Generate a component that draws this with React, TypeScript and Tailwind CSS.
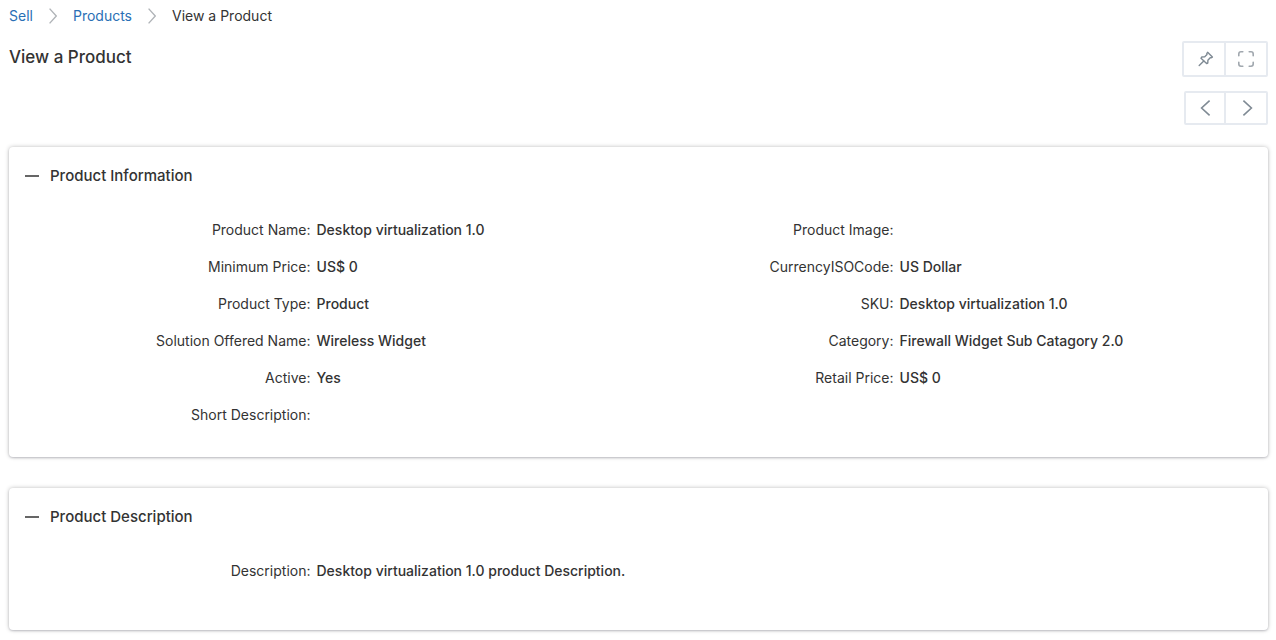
import React, { useState } from 'react'

type Field = { label: string; value: string }

const leftFields: Field[] = [
  { label: 'Product Name', value: 'Desktop virtualization 1.0' },
  { label: 'Minimum Price', value: 'US$ 0' },
  { label: 'Product Type', value: 'Product' },
  { label: 'Solution Offered Name', value: 'Wireless Widget' },
  { label: 'Active', value: 'Yes' },
  { label: 'Short Description', value: '' },
]

const rightFields: Field[] = [
  { label: 'Product Image', value: '' },
  { label: 'CurrencyISOCode', value: 'US Dollar' },
  { label: 'SKU', value: 'Desktop virtualization 1.0' },
  { label: 'Category', value: 'Firewall Widget Sub Catagory 2.0' },
  { label: 'Retail Price', value: 'US$ 0' },
]

const CrumbArrow = () => (
  <svg className="w-2 h-4 shrink-0" viewBox="0 0 8 16" fill="none" stroke="#b0b4b8" strokeWidth="1.4" aria-hidden="true">
    <path d="M0.6 0.6 7.3 8 0.6 15.4" />
  </svg>
)

const PinIcon = () => (
  <svg className="w-4 h-4" viewBox="0 0 16 16" fill="none" stroke="#7f8a94" strokeWidth="1.4" strokeLinejoin="round" strokeLinecap="round" aria-hidden="true">
    <path d="M9.6 1.3 14.4 6.1 13 6.9 12.2 6.7 9.9 9.2 9.8 12 8.6 12.6 3 7.3 3.7 6 6.5 5.9 9 3.6 8.8 2.6Z" />
    <path d="M5.8 10 1.2 14.6" />
  </svg>
)

const ExpandIcon = () => (
  <svg className="w-4 h-4" viewBox="0 0 16 16" fill="none" stroke="#a0a7ae" strokeWidth="1.6" strokeLinecap="round" aria-hidden="true">
    <path d="M0.8 4.8V3Q0.8 0.8 3 0.8H4.8M11.2 0.8H13Q15.2 0.8 15.2 3V4.8M15.2 11.2V13Q15.2 15.2 13 15.2H11.2M4.8 15.2H3Q0.8 15.2 0.8 13V11.2" />
  </svg>
)

const ArrowIcon = ({ path }: { path: string }) => (
  <svg className="w-4 h-4" viewBox="0 0 16 16" fill="none" stroke="#7f8a94" strokeWidth="1.6" aria-hidden="true">
    <path d={path} />
  </svg>
)

const FieldList = ({ fields }: { fields: Field[] }) => {
  return (
    <dl className="text-sm">
      {fields.map((field) => (
        <div key={field.label} className="flex gap-1.5 h-[37px] items-center">
          <dt className="w-[44%] shrink-0 text-right">{field.label}:</dt>
          <dd className="font-medium">{field.value}</dd>
        </div>
      ))}
    </dl>
  )
}

const Section = ({ title, children }: { title: string; children: React.ReactNode }) => {
  const [open, setOpen] = useState(true)

  return (
    <section className="rounded-sm bg-white shadow-[0_0_4px_rgba(0,0,0,0.25),0_1px_2px_rgba(0,0,40,0.15)] pt-[17px] pb-6 min-h-[142px]">
      <h2>
        <button
          type="button"
          aria-expanded={open}
          onClick={() => setOpen(!open)}
          className="flex items-center gap-[11px] px-4 h-6 text-[15px] font-medium cursor-pointer"
        >
          <span className="flex items-center justify-center w-3.5 h-3.5">
            <span className="w-3.5 h-0.5 bg-[#666]"></span>
          </span>
          {title}
        </button>
      </h2>
      {open && <div className="grid grid-cols-2 pl-[45px] pr-12 pt-[23px]">{children}</div>}
    </section>
  )
}

export default function App() {
  return (
    <main className="pl-[9px] pr-2 pb-2 bg-white text-[#333] font-['Inter',sans-serif]">
      <nav aria-label="Breadcrumb" className="flex items-center gap-4 h-8 text-sm">
        <a href="#sell" className="text-[#2a6fb5]">Sell</a>
        <CrumbArrow />
        <a href="#products" className="text-[#2a6fb5]">Products</a>
        <CrumbArrow />
        <span>View a Product</span>
      </nav>

      <header className="flex justify-between pt-[9px]">
        <h1 className="text-[17px] font-medium leading-8">View a Product</h1>
        <div className="flex flex-col items-end gap-3.5">
          <div className="flex h-9 border-2 border-[#e6eaf0] rounded-xs divide-x-2 divide-[#e6eaf0]">
            <button type="button" aria-label="Pin" className="w-[42px] flex items-center justify-center pl-1">
              <PinIcon />
            </button>
            <button type="button" aria-label="Full screen" className="w-10 flex items-center justify-center">
              <ExpandIcon />
            </button>
          </div>
          <div className="flex h-[34px] border-2 border-[#e6eaf0] rounded-xs divide-x-2 divide-[#e6eaf0]">
            <button type="button" aria-label="Previous" className="w-10 flex items-center justify-center">
              <ArrowIcon path="M12.6 0.6 4.6 8 12.6 15.4" />
            </button>
            <button type="button" aria-label="Next" className="w-10 flex items-center justify-center">
              <ArrowIcon path="M5.4 0.6 13.4 8 5.4 15.4" />
            </button>
          </div>
        </div>
      </header>

      <div className="flex flex-col gap-[31px] mt-[22px]">
        <Section title="Product Information">
          <FieldList fields={leftFields} />
          <FieldList fields={rightFields} />
        </Section>
        <Section title="Product Description">
          <FieldList fields={[{ label: 'Description', value: 'Desktop virtualization 1.0 product Description.' }]} />
        </Section>
      </div>
    </main>
  )
}
